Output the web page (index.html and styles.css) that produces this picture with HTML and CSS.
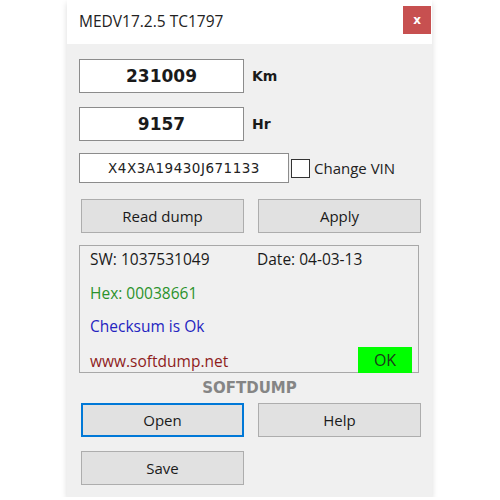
FILE: index.html
```html
<!DOCTYPE html>
<html lang="en">
<head>
    <meta charset="UTF-8">
    <meta name="viewport" content="width=device-width, initial-scale=1.0">
    <title>MEDV17.2.5 TC1797</title>
    <link rel="stylesheet" href="styles.css">
</head>
<body>
    <div class="window">
        <div class="title-bar">
            <span class="title">MEDV17.2.5 TC1797</span>
            <button class="close-btn">x</button>
        </div>

        <div class="window-body">
            <div class="field-row">
                <input class="big-field" type="text" value="231009" readonly>
                <span class="unit">Km</span>
            </div>

            <div class="field-row hr-row">
                <input class="big-field" type="text" value="9157" readonly>
                <span class="unit">Hr</span>
            </div>

            <div class="field-row vin-row">
                <input class="vin-field" type="text" value="X4X3A19430J671133" readonly>
                <label class="check">
                    <span class="check-box"></span>
                    Change VIN
                </label>
            </div>

            <div class="btn-row first-btns">
                <button class="win-btn">Read dump</button>
                <button class="win-btn">Apply</button>
            </div>

            <div class="info-box">
                <div class="info-line">
                    <span class="sw">SW: 1037531049</span>
                    <span class="date">Date: 04-03-13</span>
                </div>
                <div class="info-line hex">Hex: 00038661</div>
                <div class="info-line checksum">Checksum is Ok</div>
                <div class="info-line last-line">
                    <span class="site">www.softdump.net</span>
                    <span class="ok-badge">OK</span>
                </div>
            </div>

            <div class="brand">SOFTDUMP</div>

            <div class="btn-row">
                <button class="win-btn focused">Open</button>
                <button class="win-btn">Help</button>
            </div>

            <div class="btn-row save-row">
                <button class="win-btn">Save</button>
            </div>
        </div>
    </div>
</body>
</html>
```

FILE: styles.css
```css
body {
    margin: 0;
    padding: 0;
    background: #ffffff;
    font-family: 'Open Sans', 'Noto Sans', sans-serif;
    color: #1a1a1a;
}

.window {
    margin-left: 67px;
    width: 365px;
    box-shadow: 0 3px 6px rgba(0, 0, 0, 0.15);
}

.title-bar {
    height: 44px;
    background: #ffffff;
    display: flex;
    align-items: center;
    justify-content: space-between;
    padding: 0 1px 0 12px;
}

.title {
    font-size: 15.5px;
    color: #222;
    margin-top: -3px;
}

.close-btn {
    width: 28px;
    height: 28px;
    border: none;
    background: #c75050;
    color: #fff;
    font-family: 'DejaVu Sans', sans-serif;
    font-weight: bold;
    font-size: 12px;
    padding: 0;
    margin-top: -4px;
}

.window-body {
    background: #f0f0f0;
    height: 453px;
    padding: 15px 0 0 12px;
    box-sizing: border-box;
    display: flex;
    flex-direction: column;
}

.field-row {
    display: flex;
    align-items: center;
}

.hr-row {
    margin-top: 14px;
}

.vin-row {
    margin-top: 12px;
}

.big-field {
    width: 165px;
    height: 34px;
    box-sizing: border-box;
    border: 1px solid #8c8c8c;
    background: #fff;
    text-align: center;
    font-family: 'DejaVu Sans', sans-serif;
    font-weight: bold;
    font-size: 17px;
    color: #1a1a1a;
    padding: 0;
    outline: none;
}

.unit {
    margin-left: 8px;
    font-family: 'DejaVu Sans', sans-serif;
    font-weight: bold;
    font-size: 14px;
    color: #1a1a1a;
}

.vin-field {
    width: 210px;
    height: 30px;
    box-sizing: border-box;
    border: 1px solid #8c8c8c;
    background: #fff;
    text-align: center;
    font-family: 'DejaVu Sans', sans-serif;
    font-size: 13.5px;
    letter-spacing: 0.5px;
    color: #222;
    padding: 0;
    outline: none;
}

.check {
    display: flex;
    align-items: center;
    margin-left: 2px;
    font-size: 15px;
    color: #222;
}

.check-box {
    width: 17px;
    height: 17px;
    border: 1px solid #333;
    background: #fff;
    margin-right: 4px;
}

.btn-row {
    display: flex;
    gap: 14px;
    padding-left: 2px;
}

.first-btns {
    margin-top: 16px;
}

.win-btn {
    width: 163px;
    height: 34px;
    box-sizing: border-box;
    border: 1px solid #adadad;
    background: #e1e1e1;
    font-family: 'Open Sans', 'Noto Sans', sans-serif;
    font-size: 15px;
    color: #1a1a1a;
    padding: 0;
}

.win-btn.focused {
    border: 2px solid #0078d7;
}

.info-box {
    margin-top: 12px;
    width: 340px;
    height: 128px;
    box-sizing: border-box;
    border: 1px solid #a8a8a8;
    padding: 2px 6px 0 10px;
    display: flex;
    flex-direction: column;
    font-size: 15.5px;
}

.info-line {
    height: 22px;
    display: flex;
    align-items: center;
}

.sw {
    width: 167px;
}

.hex {
    margin-top: 12px;
    color: #2b922b;
}

.checksum {
    margin-top: 11px;
    color: #2424c0;
}

.last-line {
    margin-top: 7px;
    height: 28px;
    justify-content: space-between;
    align-items: flex-end;
}

.site {
    color: #8e1c1c;
}

.ok-badge {
    width: 54px;
    height: 26px;
    background: #00ff00;
    display: flex;
    align-items: center;
    justify-content: center;
    font-size: 16px;
    color: #1a3a1a;
    margin-bottom: -1px;
}

.brand {
    height: 30px;
    display: flex;
    align-items: center;
    justify-content: center;
    padding-right: 12px;
    font-family: 'DejaVu Sans', sans-serif;
    font-weight: bold;
    font-size: 15px;
    color: #858585;
}

.save-row {
    margin-top: 14px;
}
```
